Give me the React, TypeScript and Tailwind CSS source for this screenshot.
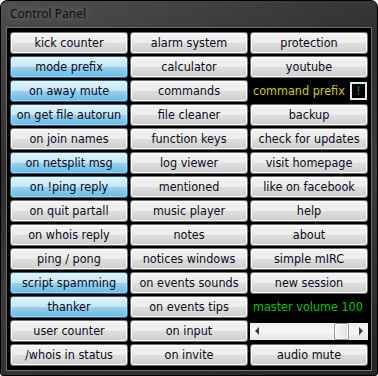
import React from 'react';

type Cell =
  | { kind: 'btn'; label: string; on?: boolean }
  | { kind: 'prefix' }
  | { kind: 'volume' }
  | { kind: 'slider' };

const b = (label: string, on = false): Cell => ({ kind: 'btn', label, on });

const rows: Cell[][] = [
  [b('kick counter'), b('alarm system'), b('protection')],
  [b('mode prefix', true), b('calculator'), b('youtube')],
  [b('on away mute', true), b('commands'), { kind: 'prefix' }],
  [b('on get file autorun', true), b('file cleaner'), b('backup')],
  [b('on join names'), b('function keys'), b('check for updates')],
  [b('on netsplit msg', true), b('log viewer'), b('visit homepage')],
  [b('on !ping reply', true), b('mentioned'), b('like on facebook')],
  [b('on quit partall'), b('music player'), b('help')],
  [b('on whois reply'), b('notes'), b('about')],
  [b('ping / pong'), b('notices windows'), b('simple mIRC')],
  [b('script spamming', true), b('on events sounds'), b('new session')],
  [b('thanker', true), b('on events tips'), { kind: 'volume' }],
  [b('user counter'), b('on input'), { kind: 'slider' }],
  [b('/whois in status'), b('on invite'), b('audio mute')],
];

const Button: React.FC<{ label: string; on?: boolean }> = ({ label, on }) => (
  <button
    className={`h-[22px] w-full whitespace-nowrap rounded-[3px] border text-[12.5px] leading-none text-[#0a0a20] ${
      on
        ? 'border-[#2c628b] bg-[linear-gradient(to_bottom,#e3f3fb_0%,#c4e5f6_50%,#98d1ef_50%,#6cbbe5_100%)] shadow-[inset_0_0_0_1px_rgba(255,255,255,0.35)]'
        : 'border-[#707070] bg-[linear-gradient(to_bottom,#f4f4f4_0%,#ececec_50%,#dedede_50%,#d0d0d0_100%)] shadow-[inset_0_0_0_1px_rgba(255,255,255,0.85)]'
    }`}
  >
    {label}
  </button>
);

const Slider: React.FC = () => (
  <div className="flex h-[22px] items-center">
    <div className="flex h-[17px] w-full items-center bg-[linear-gradient(to_bottom,#ececec,#f6f6f6_50%,#e6e6e6)]">
      <div className="flex w-[14px] justify-center">
        <span className="h-0 w-0 border-y-[4px] border-r-[4px] border-y-transparent border-r-[#3a3a3a]" />
      </div>
      <div className="flex-1" />
      <div className="h-[17px] w-[15px] rounded-[2px] border border-[#9a9a9a] bg-[linear-gradient(to_right,#f4f4f4,#e2e2e2)] shadow-[inset_0_0_0_1px_rgba(255,255,255,0.8)]" />
      <div className="w-[5px]" />
      <div className="flex w-[14px] justify-center">
        <span className="h-0 w-0 border-y-[4px] border-l-[4px] border-y-transparent border-l-[#3a3a3a]" />
      </div>
    </div>
  </div>
);

export default function App() {
  return (
    <div className="h-[376px] w-[378px] overflow-hidden rounded-t-[7px] rounded-b-[3px] border border-black bg-[linear-gradient(160deg,#505050_0%,#2e2e2e_35%,#3c3c3c_60%,#242424_100%)] font-['DejaVu_Sans_Condensed','DejaVu_Sans',sans-serif]">
      <div className="flex h-[26px] items-center pl-[9px]">
        <span className="font-['Noto_Sans',sans-serif] text-[12px] text-[#0e0e0e] [text-shadow:0_0_8px_rgba(200,200,200,0.5)]">
          Control Panel
        </span>
      </div>
      <div className="mx-[5px] border border-[#6e6e6e] bg-black px-[3px] pt-[4px] pb-[4px]">
        <div className="grid grid-cols-3 gap-[2px]">
          {rows.flat().map((c, i) => {
            if (c.kind === 'btn') return <Button key={i} label={c.label} on={c.on} />;
            if (c.kind === 'prefix')
              return (
                <div key={i} className="flex h-[22px] items-center justify-between pl-[3px]">
                  <span className="text-[12.5px] text-[#cccc00]">command prefix</span>
                  <span className="mr-[1px] flex h-[18px] w-[17px] items-center justify-center border-2 border-[#e8e8e8] bg-black text-[12px] text-[#10a010]">
                    !
                  </span>
                </div>
              );
            if (c.kind === 'volume')
              return (
                <div key={i} className="flex h-[22px] items-center pl-[3px]">
                  <span className="text-[12.5px] text-[#00c400]">master volume 100</span>
                </div>
              );
            return <Slider key={i} />;
          })}
        </div>
      </div>
    </div>
  );
}
